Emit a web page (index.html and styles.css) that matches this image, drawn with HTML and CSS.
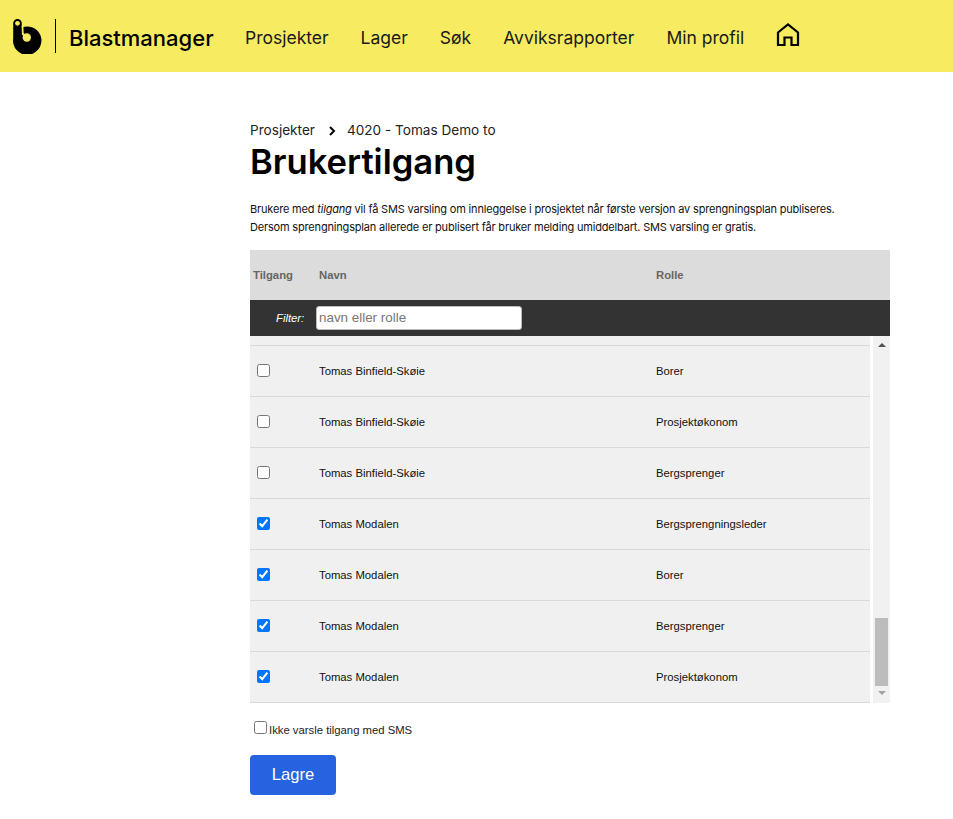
FILE: index.html
```html
<!DOCTYPE html>
<html lang="en">
<head>
    <meta charset="UTF-8">
    <title>Brukertilgang</title>
    <link rel="stylesheet" href="styles.css">
</head>
<body>
    <header class="topbar">
        <div class="brand">
            <svg class="brand-logo" width="30" height="36" viewBox="0 0 30 36">
                <path fill="#000" d="M4.500 1a4.300 4.300 0 0 1 4.300 4.300V9.500A14.200 14.200 0 1 1 .2 20.500V5.300A4.300 4.300 0 0 1 4.500 1z"/>
                <circle cx="4.500" cy="5.300" r="2.400" fill="#f6eb61"/>
                <path fill="none" stroke="#f6eb61" stroke-width="1.800" d="M9.500 7.500 9.800 17"/>
                <circle cx="13.800" cy="19.500" r="4.200" fill="#f6eb61"/>
                <path fill="none" stroke="#f6eb61" stroke-width="2.200" d="M9.800 15.500l2 2.500"/>
            </svg>
            <span class="brand-divider"></span>
            <span class="brand-name">Blastmanager</span>
        </div>
        <nav class="nav">
            <a href="#">Prosjekter</a>
            <a href="#">Lager</a>
            <a href="#">Søk</a>
            <a href="#">Avviksrapporter</a>
            <a href="#">Min profil</a>
            <a href="#" class="nav-home">
                <svg width="24" height="24" viewBox="0 0 24 24" fill="none" stroke="#000" stroke-width="2.200">
                    <path d="M2 9.500 12 1.500l10 8V22h-6.500v-7.500h-7V22H2z"/>
                </svg>
            </a>
        </nav>
    </header>

    <main class="content">
        <div class="breadcrumb">
            <span>Prosjekter</span>
            <svg class="crumb-arrow" width="8" height="10" viewBox="0 0 8 10" fill="none" stroke="#000" stroke-width="2"><path d="M2 1l4 4-4 4"/></svg>
            <span>4020 - Tomas Demo to</span>
        </div>
        <h1>Brukertilgang</h1>
        <p class="intro">Brukere med <em>tilgang</em> vil få SMS varsling om innleggelse i prosjektet når første versjon av sprengningsplan publiseres.<br>Dersom sprengningsplan allerede er publisert får bruker melding umiddelbart. SMS varsling er gratis.</p>

        <div class="table-head">
            <span class="col-access">Tilgang</span>
            <span class="col-name">Navn</span>
            <span>Rolle</span>
        </div>
        <div class="filter-bar">
            <label for="filter">Filter:</label>
            <input type="text" id="filter" placeholder="navn eller rolle">
        </div>
        <div class="table-body">
            <div class="rows">
                <div class="row row-cut"></div>
                <div class="row"><span class="col-access"><input type="checkbox"></span><span class="col-name">Tomas Binfield-Skøie</span><span>Borer</span></div>
                <div class="row"><span class="col-access"><input type="checkbox"></span><span class="col-name">Tomas Binfield-Skøie</span><span>Prosjektøkonom</span></div>
                <div class="row"><span class="col-access"><input type="checkbox"></span><span class="col-name">Tomas Binfield-Skøie</span><span>Bergsprenger</span></div>
                <div class="row"><span class="col-access"><input type="checkbox" checked></span><span class="col-name">Tomas Modalen</span><span>Bergsprengningsleder</span></div>
                <div class="row"><span class="col-access"><input type="checkbox" checked></span><span class="col-name">Tomas Modalen</span><span>Borer</span></div>
                <div class="row"><span class="col-access"><input type="checkbox" checked></span><span class="col-name">Tomas Modalen</span><span>Bergsprenger</span></div>
                <div class="row"><span class="col-access"><input type="checkbox" checked></span><span class="col-name">Tomas Modalen</span><span>Prosjektøkonom</span></div>
            </div>
            <div class="scrollbar">
                <span class="arrow-up"></span>
                <span class="thumb"></span>
                <span class="arrow-down"></span>
            </div>
        </div>

        <label class="sms-opt"><input type="checkbox">Ikke varsle tilgang med SMS</label>
        <button class="save">Lagre</button>
    </main>
</body>
</html>
```

FILE: styles.css
```css
* {
    box-sizing: border-box;
}

body {
    margin: 0;
    background: #fff;
    color: #000;
    font-family: "Liberation Sans", Arial, sans-serif;
}

.topbar {
    display: flex;
    align-items: center;
    height: 72px;
    background: #f6eb61;
    padding-left: 13px;
}

.brand {
    display: flex;
    align-items: center;
}

.brand-divider {
    width: 1px;
    height: 34px;
    background: #000;
    margin: 0 13px 0 12px;
}

.brand-name {
    font-family: Inter, sans-serif;
    font-size: 22px;
    font-weight: 500;
    width: 144px;
    margin-top: 4px;
    white-space: nowrap;
}

.nav {
    display: flex;
    align-items: center;
    gap: 32px;
    margin-left: 32px;
    margin-top: 2px;
}

.nav a {
    font-family: Inter, sans-serif;
    font-size: 17.5px;
    color: #1a1a1a;
    text-decoration: none;
}

.nav-home {
    display: flex;
    margin-top: -4px;
}

.content {
    margin-left: 250px;
    width: 640px;
    padding-top: 50px;
}

.breadcrumb {
    display: flex;
    align-items: center;
    font-family: Inter, sans-serif;
    font-size: 13.6px;
    line-height: 17px;
    color: #222;
}

.crumb-arrow {
    margin: 0 11px 0 13px;
}

h1 {
    font-family: Inter, sans-serif;
    font-size: 34.600px;
    font-weight: 600;
    line-height: 42px;
    margin: 1px 0 0;
}

.intro {
    font-family: Inter, sans-serif;
    font-size: 11px;
    letter-spacing: -0.18px;
    line-height: 18px;
    margin: 18px 0 14px;
    color: #111;
}

.table-head {
    display: flex;
    align-items: center;
    height: 50px;
    background: #dcdcdc;
    font-size: 11.3px;
    font-weight: bold;
    color: #666;
}

.col-access {
    width: 69px;
    flex: none;
}

.table-head .col-access {
    padding-left: 3px;
}

.col-name {
    width: 337px;
    flex: none;
}

.filter-bar {
    display: flex;
    align-items: center;
    height: 36px;
    background: #333;
    padding-left: 26px;
}

.filter-bar label {
    font-size: 11.3px;
    font-style: italic;
    color: #fff;
    width: 40px;
}

.filter-bar input {
    width: 206px;
    height: 24px;
    border: 1px solid #bbb;
    border-radius: 3px;
    padding: 0 2px 2px;
    font-family: "Liberation Sans", Arial, sans-serif;
    font-size: 13.4px;
    background: #fff;
}

.filter-bar input::placeholder {
    color: #777;
}

.table-body {
    display: flex;
    height: 367px;
}

.rows {
    width: 620px;
    background: #f0f0f0;
}

.row {
    display: flex;
    align-items: center;
    height: 51px;
    border-bottom: 1px solid #d9d9d9;
    font-size: 11.3px;
    color: #111;
}

.row-cut {
    height: 10px;
}

.row .col-access {
    display: flex;
    padding-left: 7px;
}

.row input {
    margin: 0 0 2px;
}

.scrollbar {
    display: flex;
    flex-direction: column;
    align-items: center;
    width: 17px;
    margin-left: 3px;
    background: #f1f1f1;
}

.arrow-up {
    border: 4px solid transparent;
    border-top: 0;
    border-bottom: 4px solid #505050;
    margin-top: 7px;
}

.thumb {
    width: 13px;
    height: 68px;
    background: #bcbcbc;
    margin-top: 271px;
}

.arrow-down {
    border: 4px solid transparent;
    border-bottom: 0;
    border-top: 4px solid #a3a3a3;
    margin-top: 5px;
}

.sms-opt {
    display: flex;
    align-items: center;
    font-size: 11.3px;
    color: #222;
    margin: 19px 0 0 4px;
    height: 15px;
}

.sms-opt input {
    margin: 0 2px 5px 0;
}

.save {
    display: block;
    width: 86px;
    height: 40px;
    margin-top: 18px;
    border: none;
    border-radius: 4px;
    background: #2563e0;
    color: #fff;
    font-family: "Liberation Sans", Arial, sans-serif;
    font-size: 16.6px;
}
```
